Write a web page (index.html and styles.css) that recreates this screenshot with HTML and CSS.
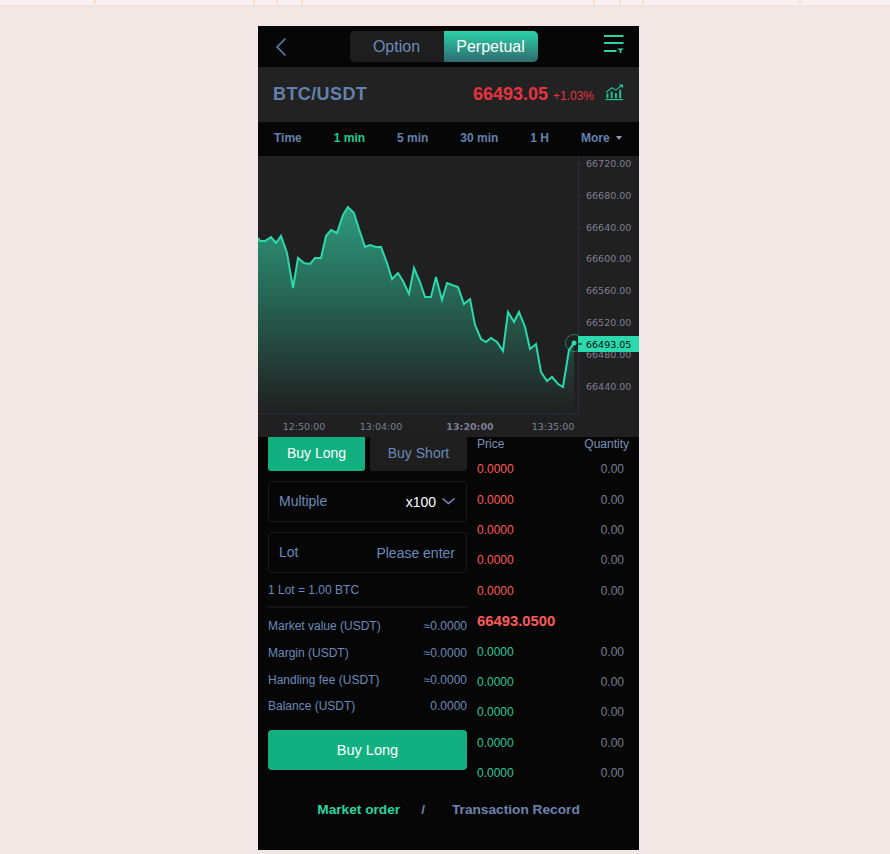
FILE: index.html
```html
<!DOCTYPE html>
<html lang="en">
<head>
    <meta charset="UTF-8">
    <meta name="viewport" content="width=device-width, initial-scale=1.0">
    <title>BTC/USDT Perpetual</title>
    <link rel="stylesheet" href="styles.css">
</head>
<body>
    <div class="top-strip">
        <span></span><span></span><span></span><span></span><span></span><span></span><span></span><span></span><span></span>
    </div>

    <div class="panel">
        <header class="header">
            <svg class="back-icon" width="12" height="20" viewBox="0 0 12 20">
                <path d="M10.5 1.5 L2 10 L10.5 18.5" fill="none" stroke="#5f82b4" stroke-width="1.5"/>
            </svg>
            <div class="switch">
                <div class="switch-item">Option</div>
                <div class="switch-item active">Perpetual</div>
            </div>
            <svg class="menu-icon" width="20" height="18" viewBox="0 0 20 18">
                <path d="M0 1 H19.5 M0 8 H19.5 M0 16 H12.5" fill="none" stroke="#2bd4a4" stroke-width="2"/>
                <path d="M13 13.5 H20 L17.3 15.5 V18 H15.7 V15.5 Z" fill="#2bd4a4"/>
            </svg>
        </header>

        <div class="symbol-bar">
            <div class="symbol">BTC/USDT</div>
            <div class="quote">
                <span class="quote-price">66493.05</span>
                <span class="quote-change">+1.03%</span>
                <svg class="trend-icon" width="19" height="17" viewBox="0 0 19 18">
                    <path d="M0 16.5 H18.5" stroke="#1fc596" stroke-width="1.2"/>
                    <path d="M2 15 V10 M6.5 15 V8 M11 15 V9.5 M15.5 15 V6" stroke="#1fc596" stroke-width="2"/>
                    <path d="M0.5 9 L6.5 4 L11 6.5 L17 1.5" fill="none" stroke="#1fc596" stroke-width="1.2"/>
                    <path d="M14 0.5 H18.5 V4.5 Z" fill="#1fc596"/>
                </svg>
            </div>
        </div>

        <nav class="periods">
            <span>Time</span>
            <span class="current">1 min</span>
            <span>5 min</span>
            <span>30 min</span>
            <span>1 H</span>
            <span class="more">More <i class="caret"></i></span>
        </nav>

        <div class="chart">
            <svg width="381" height="281" viewBox="258 156 381 281">
                <defs>
                    <linearGradient id="areaFill" gradientUnits="userSpaceOnUse" x1="0" y1="207" x2="0" y2="413">
                        <stop offset="0" stop-color="#2fb590" stop-opacity="0.82"/>
                        <stop offset="1" stop-color="#2fb590" stop-opacity="0"/>
                    </linearGradient>
                </defs>
                <polygon fill="url(#areaFill)" points="258,238 260,241 265,241 271,237 276,243 281,236 287,253 293,288 298,258 304,263 310,264 315,258 321,258 326,236 331,230 337,233 343,215 348,207 354,213 359,229 365,247 370,245 376,247 381,247 387,263 392,279 398,273 403,281 409,294 414,268 420,282 425,297 431,297 436,277 442,300 447,283 452,285 458,287 464,304 470,299 475,325 481,339 486,342 491,338 497,342 503,351 508,312 514,322 519,312 525,327 530,349 536,344 541,372 547,381 552,377 558,384 563,387 569,350 574,343 574,413 258,413"/>
                <polyline fill="none" stroke="#2bd9ac" stroke-width="2" points="258,238 260,241 265,241 271,237 276,243 281,236 287,253 293,288 298,258 304,263 310,264 315,258 321,258 326,236 331,230 337,233 343,215 348,207 354,213 359,229 365,247 370,245 376,247 381,247 387,263 392,279 398,273 403,281 409,294 414,268 420,282 425,297 431,297 436,277 442,300 447,283 452,285 458,287 464,304 470,299 475,325 481,339 486,342 491,338 497,342 503,351 508,312 514,322 519,312 525,327 530,349 536,344 541,372 547,381 552,377 558,384 563,387 569,350 574,343"/>

                <path class="axis" d="M578.5 156 V413.5 H258"/>
                <path class="axis" d="M578 164 H582 M578 196 H582 M578 228 H582 M578 259 H582 M578 291 H582 M578 323 H582 M578 355 H582 M578 387 H582 M304 414 V416 M381 414 V416 M470 414 V416 M553 414 V416"/>

                <text class="tick" x="586" y="167">66720.00</text>
                <text class="tick" x="586" y="199">66680.00</text>
                <text class="tick" x="586" y="231">66640.00</text>
                <text class="tick" x="586" y="262">66600.00</text>
                <text class="tick" x="586" y="294">66560.00</text>
                <text class="tick" x="586" y="326">66520.00</text>
                <text class="tick" x="586" y="358">66480.00</text>
                <text class="tick" x="586" y="390">66440.00</text>

                <text class="tick mid" x="304" y="430">12:50:00</text>
                <text class="tick mid" x="381" y="430">13:04:00</text>
                <text class="tick mid strong" x="470" y="430">13:20:00</text>
                <text class="tick mid" x="553" y="430">13:35:00</text>

                <circle cx="574" cy="343" r="8.5" fill="none" stroke="#2bd9ac" stroke-opacity="0.5"/>
                <circle cx="574" cy="343" r="2.5" fill="#2bd9ac"/>
                <rect x="578" y="336" width="61" height="16" fill="#2bd9ac"/>
                <path d="M578 344 H582" stroke="#0a0a0a"/>
                <text class="tick now" x="586" y="348">66493.05</text>
            </svg>
        </div>

        <div class="trade">
            <div class="order-form">
                <div class="side-tabs">
                    <div class="side-tab long">Buy Long</div>
                    <div class="side-tab">Buy Short</div>
                </div>
                <div class="field">
                    <span class="field-label">Multiple</span>
                    <span class="field-value">x100
                        <svg width="13" height="7" viewBox="0 0 13 7"><path d="M0.5 0.5 L6.5 5.5 L12.5 0.5" fill="none" stroke="#6f8fc0" stroke-width="1.5"/></svg>
                    </span>
                </div>
                <div class="field">
                    <span class="field-label">Lot</span>
                    <span>Please enter</span>
                </div>
                <div class="lot-note">1 Lot = 1.00 BTC</div>
                <div class="summary">
                    <div class="summary-row"><span>Market value (USDT)</span><span>≈0.0000</span></div>
                    <div class="summary-row"><span>Margin (USDT)</span><span>≈0.0000</span></div>
                    <div class="summary-row"><span>Handling fee (USDT)</span><span>≈0.0000</span></div>
                    <div class="summary-row"><span>Balance (USDT)</span><span>0.0000</span></div>
                </div>
                <button class="submit">Buy Long</button>
            </div>

            <div class="book">
                <div class="book-head"><span>Price</span><span>Quantity</span></div>
                <div class="book-row ask"><span>0.0000</span><span class="qty">0.00</span></div>
                <div class="book-row ask"><span>0.0000</span><span class="qty">0.00</span></div>
                <div class="book-row ask"><span>0.0000</span><span class="qty">0.00</span></div>
                <div class="book-row ask"><span>0.0000</span><span class="qty">0.00</span></div>
                <div class="book-row ask"><span>0.0000</span><span class="qty">0.00</span></div>
                <div class="book-mid">66493.0500</div>
                <div class="book-row bid"><span>0.0000</span><span class="qty">0.00</span></div>
                <div class="book-row bid"><span>0.0000</span><span class="qty">0.00</span></div>
                <div class="book-row bid"><span>0.0000</span><span class="qty">0.00</span></div>
                <div class="book-row bid"><span>0.0000</span><span class="qty">0.00</span></div>
                <div class="book-row bid"><span>0.0000</span><span class="qty">0.00</span></div>
            </div>
        </div>

        <div class="footer-links">
            <span class="link-active">Market order</span>
            <span class="slash">/</span>
            <span class="link">Transaction Record</span>
        </div>
    </div>
</body>
</html>
```

FILE: styles.css
```css
body {
    margin: 0;
    background-color: #f2e7e5;
    font-family: "Liberation Sans", Arial, sans-serif;
    overflow: hidden;
}

.top-strip {
    display: grid;
    grid-template-columns: 96px 159px 23px 25px 292px 26px 23px 157px 1fr;
    height: 5px;
    background-color: #f8f1f2;
    border-bottom: 1px solid #fde0d4;
}

.top-strip span {
    height: 4px;
    border-right: 2px solid #fddccd;
}

.top-strip span:last-child { border-right: none; }

.panel {
    width: 381px;
    height: 824px;
    margin: 20px 0 0 258px;
    background-color: #060606;
    color: #6a8abb;
}

.header {
    display: flex;
    align-items: center;
    justify-content: space-between;
    height: 41px;
    padding: 0 15px 0 17px;
    box-sizing: border-box;
}

.back-icon { display: block; }
.menu-icon { margin-bottom: 5px; }

.switch {
    display: flex;
    width: 188px;
    height: 31px;
    margin-right: 4px;
    border-radius: 5px;
    overflow: hidden;
    background-color: #1e1e1e;
    font-size: 16px;
}

.switch-item {
    flex: 1;
    line-height: 31px;
    text-align: center;
}

.switch-item.active {
    color: #fff;
    background: linear-gradient(180deg, #2bd3a8, #2f6a70);
}

.symbol-bar {
    display: flex;
    align-items: center;
    justify-content: space-between;
    height: 55px;
    padding: 0 15px;
    background-color: #222222;
}

.symbol {
    font-size: 18px;
    font-weight: bold;
    letter-spacing: 0.4px;
    color: #6481ad;
}

.quote {
    display: flex;
    align-items: center;
}

.quote-price {
    font-size: 18px;
    font-weight: bold;
    color: #e5343f;
}

.quote-change {
    margin: 2px 11px 0 5px;
    font-size: 12px;
    color: #e5343f;
}

.trend-icon { margin-bottom: 5px; }

.periods {
    display: flex;
    align-items: center;
    justify-content: space-between;
    height: 32px;
    padding: 0 17px 2px 16px;
    font-size: 12px;
    font-weight: bold;
    color: #6481ad;
}

.periods .current { color: #1fcb95; }

.caret {
    display: inline-block;
    margin-left: 3px;
    vertical-align: 2px;
    border-top: 4px solid #8a9cc0;
    border-left: 3px solid transparent;
    border-right: 3px solid transparent;
}

.chart {
    height: 281px;
    background-color: #202020;
}

.chart svg { display: block; }

.axis {
    fill: none;
    stroke: #2d2b45;
    stroke-width: 1;
}

.tick {
    font-family: "DejaVu Sans", sans-serif;
    font-size: 9.5px;
    fill: #7d7f96;
}

.tick.mid { text-anchor: middle; }
.tick.strong { font-weight: bold; }
.tick.now { fill: #0a0a0a; }

.trade {
    display: flex;
    padding: 0 10px;
}

.order-form { width: 199px; }

.side-tabs {
    display: flex;
    gap: 5px;
}

.side-tab {
    flex: 1;
    height: 34px;
    line-height: 33px;
    text-align: center;
    font-size: 14px;
    background-color: #1e1e1e;
    border-radius: 0 0 3px 3px;
}

.side-tab.long {
    color: #fff;
    background-color: #12b081;
}

.field {
    display: flex;
    align-items: center;
    justify-content: space-between;
    height: 41px;
    margin-top: 10px;
    padding: 0 11px 0 10px;
    box-sizing: border-box;
    border: 1px solid #1b1b1b;
    border-radius: 4px;
    font-size: 14px;
}

.field + .field { margin-top: 10px; }

.field-label { margin-top: -2px; }

.field-value {
    display: flex;
    align-items: center;
    gap: 6px;
    color: #fff;
}

.lot-note {
    margin-top: 9px;
    font-size: 12px;
    line-height: 16px;
    padding-bottom: 8px;
    border-bottom: 2px solid #141414;
}

.summary { padding-top: 5px; }

.summary-row {
    display: flex;
    justify-content: space-between;
    height: 26.7px;
    align-items: center;
    font-size: 12px;
}

.submit {
    display: block;
    width: 100%;
    height: 40px;
    margin-top: 10px;
    border: none;
    border-radius: 4px;
    background-color: #12b081;
    color: #fff;
    font-family: inherit;
    font-size: 14.5px;
}

.book {
    flex: 1;
    padding-left: 10px;
    font-size: 12px;
}

.book-head {
    display: flex;
    justify-content: space-between;
    height: 18px;
    margin-top: -1px;
    line-height: 16px;
    color: #7c8fb3;
}

.book-row,
.book-mid {
    display: flex;
    align-items: center;
    justify-content: space-between;
    height: 30.4px;
    padding-right: 5px;
}

.book-row.ask { color: #ff5a5a; }
.book-row.bid { color: #2bc79a; }

.qty { color: #74808f; }

.book-mid {
    font-size: 14.8px;
    font-weight: bold;
    color: #ff5a5a;
}

.footer-links {
    display: flex;
    justify-content: center;
    margin-top: 14px;
    font-size: 13.7px;
    font-weight: bold;
}

.link-active { color: #2bd49e; }
.slash { margin: 0 27px 0 21px; color: #6f82ae; }
.link { color: #6f82ae; }
```
